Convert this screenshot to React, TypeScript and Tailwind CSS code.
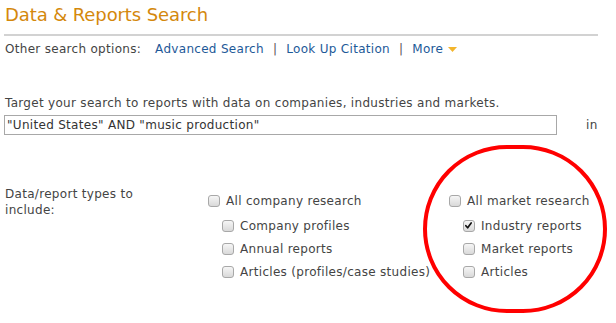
import React from "react";

function Box({ checked = false }: { checked?: boolean }) {
    return (
        <span className="relative inline-block w-[12px] h-[12px] shrink-0 rounded-[3px] border border-[#a8a8a8] bg-gradient-to-b from-[#f6f6f6] to-[#d9d9d9]">
            {checked && (
                <svg viewBox="0 0 12 12" className="absolute left-[0px] top-[0px] w-[10px] h-[10px]">
                    <path d="M2.2 5.6 L4.4 8.2 L8.6 2.4" fill="none" stroke="#111" strokeWidth="2" strokeLinecap="round" strokeLinejoin="round" />
                </svg>
            )}
        </span>
    );
}

function Row({ label, checked, sub }: { label: string; checked?: boolean; sub?: boolean }) {
    return (
        <div className={`flex items-center h-[16px] gap-[6px] ${sub ? "pl-[14px]" : ""}`}>
            <Box checked={checked} />
            <span className="whitespace-nowrap">{label}</span>
        </div>
    );
}

export default function App() {
    return (
        <div className="relative w-[616px] h-[323px] bg-white font-['DejaVu_Sans',Verdana,sans-serif] text-[12px] leading-[16px] tracking-[0.3px] text-[#444]">
            {/* Title */}
            <h1 className="pl-[5px] pt-[3px] text-[18px] leading-[24px] tracking-[-0.1px] text-[#d4880c]">
                Data &amp; Reports Search
            </h1>
            <div className="ml-[4px] mr-[18px] mt-[7px] h-[2px] bg-[#d2d2d2]" />

            {/* Other options */}
            <div className="flex items-center pl-[5px] mt-[5px] h-[16px] whitespace-nowrap">
                <span>Other search options:</span>
                <a className="ml-[14px] text-[#1d5998]">Advanced Search</a>
                <span className="mx-[9px] text-[#555]">|</span>
                <a className="text-[#1d5998]">Look Up Citation</a>
                <span className="mx-[9px] text-[#555]">|</span>
                <a className="text-[#1d5998]">More</a>
                <svg viewBox="0 0 9 5" className="ml-[5px] w-[9px] h-[5px]">
                    <path d="M0 0 L9 0 L4.5 5 Z" fill="#f3b52c" />
                </svg>
            </div>

            {/* Search box */}
            <p className="pl-[5px] mt-[38px]">
                Target your search to reports with data on companies, industries and markets.
            </p>
            <div className="flex items-center mt-[4px]">
                <input
                    readOnly
                    defaultValue={'"United States" AND "music production"'}
                    className="ml-[4px] w-[553px] h-[20px] border border-[#a8a8a8] px-[2px] font-['DejaVu_Sans',Verdana,sans-serif] text-[12px] tracking-[0.3px] text-[#333] outline-none"
                />
                <span className="ml-[29px]">in</span>
            </div>

            {/* Types */}
            <div className="flex pl-[5px] mt-[51px]">
                <div className="w-[203px]">
                    Data/report types to
                    <br />
                    include:
                </div>
                <div className="w-[241px] pt-[7px] flex flex-col gap-[7px]">
                    <div className="mb-[2px]"><Row label="All company research" /></div>
                    <Row sub label="Company profiles" />
                    <Row sub label="Annual reports" />
                    <Row sub label="Articles (profiles/case studies)" />
                </div>
                <div className="pt-[7px] flex flex-col gap-[7px]">
                    <div className="mb-[2px]"><Row label="All market research" /></div>
                    <Row sub checked label="Industry reports" />
                    <Row sub label="Market reports" />
                    <Row sub label="Articles" />
                </div>
            </div>

            {/* Annotation circle */}
            <div className="absolute left-[423px] top-[145px] w-[184px] h-[168px] rounded-full border-[4px] border-[#ff0000] pointer-events-none" />
        </div>
    );
}
